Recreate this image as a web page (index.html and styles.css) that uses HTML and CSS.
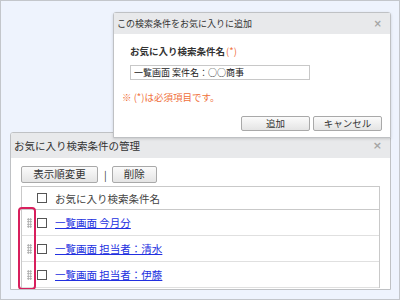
FILE: index.html
```html
<!DOCTYPE html>
<html>
<head>
<meta charset="utf-8">
<link rel="stylesheet" href="styles.css">
</head>
<body>

<div class="stage">

  <div class="dialog manage">
    <div class="dlg-head">
      <span class="dlg-title">お気に入り検索条件の管理</span>
      <span class="dlg-close">×</span>
    </div>
    <div class="dlg-body">
      <div class="toolbar">
        <button class="btn btn-wide">表示順変更</button>
        <span class="sep">|</span>
        <button class="btn btn-narrow">削除</button>
      </div>
      <div class="list">
        <div class="list-row list-head">
          <span class="grip-cell"></span>
          <span class="check"></span>
          <span class="head-label">お気に入り検索条件名</span>
        </div>
        <div class="list-row">
          <span class="grip-cell"><span class="grip"></span></span>
          <span class="check"></span>
          <a href="#" class="item-link">一覧画面 今月分</a>
        </div>
        <div class="list-row">
          <span class="grip-cell"><span class="grip"></span></span>
          <span class="check"></span>
          <a href="#" class="item-link">一覧画面 担当者：清水</a>
        </div>
        <div class="list-row">
          <span class="grip-cell"><span class="grip"></span></span>
          <span class="check"></span>
          <a href="#" class="item-link">一覧画面 担当者：伊藤</a>
        </div>
      </div>
    </div>
    <div class="mark"></div>
  </div>

  <div class="dialog add">
    <div class="dlg-head">
      <span class="dlg-title">この検索条件をお気に入りに追加</span>
      <span class="dlg-close">×</span>
    </div>
    <div class="dlg-body">
      <div class="field-label">お気に入り検索条件名<span class="req">(*)</span></div>
      <input class="field-input" type="text" value="一覧画面 案件名：○○商事">
      <div class="note">※ (*)は必須項目です。</div>
      <div class="actions">
        <button class="btn btn-act">追加</button>
        <button class="btn btn-act">キャンセル</button>
      </div>
    </div>
  </div>

</div>

</body>
</html>
```

FILE: styles.css
```css
html, body {
  margin: 0;
  padding: 0;
}

body {
  font-family: "Noto Sans CJK JP", "Liberation Sans", sans-serif;
  color: #333;
}

.stage {
  position: relative;
  width: 400px;
  height: 300px;
  box-sizing: border-box;
  border: 1px solid #c3c6cb;
  background-color: #eef3fd;
  padding: 131px 0 0 9px;
  overflow: hidden;
}

.dialog {
  background-color: #fff;
  border: 1px solid #bfc1c4;
  border-radius: 3px 3px 0 0;
  box-sizing: border-box;
}

.dlg-head {
  display: flex;
  align-items: center;
  justify-content: space-between;
  background-color: #e8e9eb;
  padding: 0 8px 0 3px;
}

.dlg-close {
  color: #a5a5a5;
  font-family: "DejaVu Sans", sans-serif;
  font-weight: bold;
}

/* management dialog */

.manage {
  position: relative;
  width: 381px;
  height: 158px;
  overflow: hidden;
}

.manage .dlg-head {
  height: 25px;
  font-size: 10.5px;
}

.manage .dlg-close {
  font-size: 11px;
}

.manage .dlg-body {
  padding: 8px 10px 0 10px;
}

.toolbar {
  display: flex;
  align-items: center;
  height: 17px;
  margin-bottom: 3px;
}

.btn {
  font-family: "Noto Sans CJK JP", "Liberation Sans", sans-serif;
  color: #333;
  background: linear-gradient(#fbfbfb, #e4e4e4);
  border: 1px solid #a9a9a9;
  border-radius: 2px;
  padding: 0;
  box-sizing: border-box;
  line-height: 1;
}

.toolbar .btn {
  height: 17px;
  font-size: 10.5px;
}

.btn-wide {
  width: 77px;
}

.btn-narrow {
  width: 45px;
}

.sep {
  font-size: 10px;
  color: #333;
  margin: 0 5px 0 6px;
}

.list {
  border: 1px solid #c9c9c9;
  border-bottom: none;
}

.list-row {
  display: flex;
  align-items: center;
  height: 25px;
  border-bottom: 1px solid #e0e0e0;
  font-size: 10.5px;
}

.list-head {
  height: 22px;
  border-bottom-color: #c9c9c9;
  color: #444;
}

.grip-cell {
  width: 15px;
  display: flex;
  justify-content: center;
}

.grip {
  width: 5px;
  height: 10px;
  background-image: radial-gradient(circle, #a8a8a8 0.9px, transparent 1px);
  background-size: 2.5px 2.5px;
}

.check {
  width: 10px;
  height: 10px;
  border: 1px solid #555;
  box-sizing: border-box;
  background-color: #fff;
  margin-right: 8px;
}

.item-link {
  color: #2230e0;
  text-decoration: underline;
}

.mark {
  position: absolute;
  left: 7px;
  top: 74px;
  width: 18px;
  height: 83px;
  box-sizing: border-box;
  border: 2px solid #d81f5d;
  border-radius: 4px;
}

/* add dialog */

.add {
  position: absolute;
  left: 112px;
  top: 11px;
  width: 278px;
  height: 126px;
  box-shadow: 0 1px 3px rgba(0, 0, 0, 0.15);
}

.add .dlg-head {
  height: 21px;
  font-size: 9px;
}

.add .dlg-close {
  font-size: 10px;
}

.add .dlg-body {
  padding: 11px 8px 0 16px;
  font-size: 9.5px;
}

.field-label {
  font-weight: bold;
  height: 13px;
  line-height: 13px;
  color: #333;
}

.req {
  color: #f0703a;
  font-weight: normal;
  margin-left: 1px;
}

.field-input {
  display: block;
  margin-top: 7px;
  width: 180px;
  height: 15px;
  box-sizing: border-box;
  border: 1px solid #c8c8c8;
  padding: 0 3px;
  font-family: "Noto Sans CJK JP", "Liberation Sans", sans-serif;
  font-size: 9px;
  color: #222;
}

.note {
  margin: 11px 0 0 -8px;
  height: 13px;
  line-height: 13px;
  color: #f0703a;
}

.actions {
  display: flex;
  justify-content: flex-end;
  gap: 3px;
  margin-top: 12px;
}

.btn-act {
  width: 69px;
  height: 15px;
  font-size: 9.5px;
}
```
